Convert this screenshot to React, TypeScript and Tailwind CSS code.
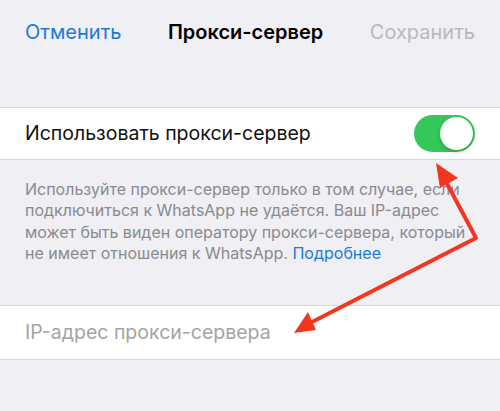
export default function App() {
  return (
    <div
      className="relative w-[500px] h-[411px] overflow-hidden bg-[#efeff4]"
      style={{ fontFamily: "Inter, 'Noto Sans', sans-serif" }}
    >
      {/* Nav bar */}
      <div className="flex items-center justify-between h-[64px] px-[25px] text-[20px]">
        <span className="text-[#1a7ad6]">Отменить</span>
        <span className="font-semibold text-black">Прокси-сервер</span>
        <span className="text-[#b9b9be]">Сохранить</span>
      </div>

      <div className="h-[43px]" />

      {/* Toggle row */}
      <div className="flex items-center justify-between h-[53px] bg-white border-y border-[#d8d8dc] px-[25px]">
        <span className="text-[19.5px] text-[#111]">Использовать прокси-сервер</span>
        <div className="flex items-center justify-end w-[61px] h-[37px] rounded-full bg-[#34c759] p-[2px]">
          <div className="w-[33px] h-[33px] rounded-full bg-white shadow-[0_2px_4px_rgba(0,0,0,0.2)]" />
        </div>
      </div>

      {/* Footer text */}
      <p className="px-[25px] pt-[19px] text-[16px] leading-[21.3px] text-[#8a8a8f] whitespace-nowrap">
        Используйте прокси-сервер только в том случае, если
        <br />
        подключиться к WhatsApp не удаётся. Ваш IP-адрес
        <br />
        может быть виден оператору прокси-сервера, который
        <br />
        не имеет отношения к WhatsApp. <span className="text-[#1a7ad6]">Подробнее</span>
      </p>

      <div className="h-[41px]" />

      {/* IP row */}
      <div className="flex items-center h-[55px] bg-white border-y border-[#d8d8dc] px-[25px]">
        <span className="text-[19.5px] text-[#a3a3a8]">IP-адрес прокси-сервера</span>
      </div>

      {/* Red annotation arrows */}
      <svg className="absolute inset-0 pointer-events-none" width="500" height="411">
        <polyline
          points="444,178 476,238 312,322"
          fill="none"
          stroke="#f2361f"
          strokeWidth="4"
          strokeLinejoin="round"
          strokeLinecap="round"
        />
        <polygon points="436,163 458,178 440,188" fill="#f2361f" />
        <polygon points="294,333 308,312 316,330" fill="#f2361f" />
      </svg>
    </div>
  );
}
